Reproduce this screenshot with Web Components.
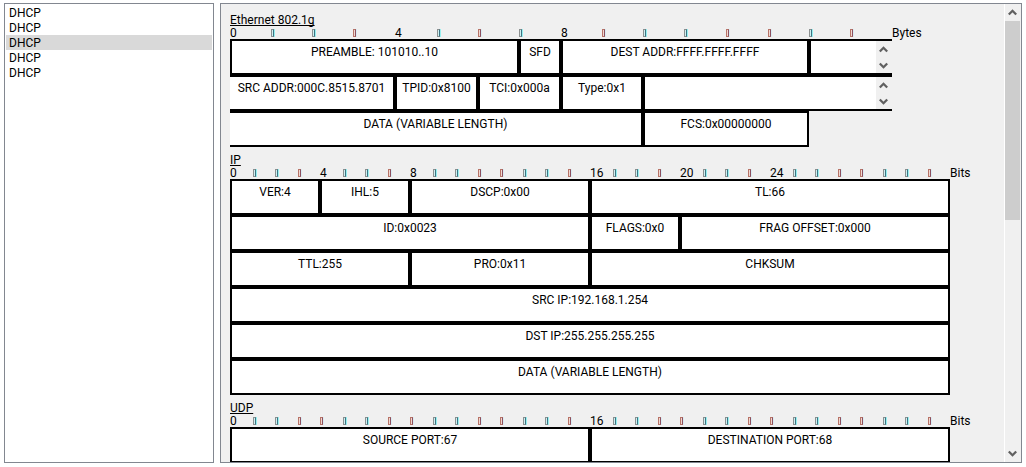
<!DOCTYPE html>
<html lang="en">
<head>
<meta charset="utf-8">
<title>Packet fields</title>
<style>
body { margin: 0; background: #fff; font: 12px/15px Roboto, "Liberation Sans", sans-serif; color: #000; }
</style>
</head>
<body>
<packet-app></packet-app>
<script>
const chevron = dir => `<svg width="9" height="7" viewBox="0 0 9 7" aria-hidden="true"><path d="${dir === 'up' ? 'M0.8 5.5 4.5 1.8 8.2 5.5' : 'M0.8 1.5 4.5 5.2 8.2 1.5'}" fill="none" stroke="#606060" stroke-width="2.3"/></svg>`;

class ScrollRail extends HTMLElement {
  connectedCallback() {
    const thumb = this.hasAttribute('thumb');
    this.attachShadow({ mode: 'open' }).innerHTML = `
      <style>
        :host { display: flex; flex-direction: column; width: 16px; flex: none; background: #f0f0f0; box-sizing: border-box; padding-right: 1px; }
        :host([thumb]) { width: 17px; border-left: 1px solid #fff; }
        button { all: unset; display: grid; place-items: center; flex: 0 1 17px; min-height: 0; }
        .track { flex: 1; min-height: 0; }
        .thumb { height: 47%; background: #cdcdcd; }
        svg { display: block; }
      </style>
      <button aria-label="Scroll up">${chevron('up')}</button>
      ${thumb ? '<div class="track"><div class="thumb"></div></div>' : ''}
      <button aria-label="Scroll down">${chevron('down')}</button>`;
  }
}
customElements.define('scroll-rail', ScrollRail);

class PacketList extends HTMLElement {
  connectedCallback() {
    this.attachShadow({ mode: 'open' }).innerHTML = `
      <style>
        :host { display: block; box-sizing: border-box; border: 1px solid #828790; background: #fff; padding: 1px; }
        ul { list-style: none; margin: 0; padding: 0; }
        li { padding: 0 3px; height: 15px; line-height: 17px; }
        li[aria-current] { background: #d9d9d9; }
      </style>
      <ul>${this.getAttribute('items').split(',').map((t, i) =>
        `<li${i === +this.getAttribute('selected') ? ' aria-current="true"' : ''}>${t}</li>`).join('')}</ul>`;
  }
}
customElements.define('packet-list', PacketList);

class FieldRuler extends HTMLElement {
  connectedCallback() {
    const n = +this.getAttribute('count');
    const labels = this.getAttribute('labels').split(',').map(Number);
    const warm = this.getAttribute('warm').split(',').map(Number);
    let cells = '';
    for (let i = 0; i < n; i++) {
      cells += labels.includes(i) ? `<span>${i}</span>` : `<i class="${warm.includes(i) ? 'warm' : ''}"></i>`;
    }
    this.attachShadow({ mode: 'open' }).innerHTML = `
      <style>
        :host { display: flex; height: 13px; line-height: 15px; }
        .scale { display: grid; grid-template-columns: var(--cols); width: var(--span); }
        span { width: 0; white-space: nowrap; }
        i { width: 1px; height: 6px; margin-top: 3px; border: 1px solid #8c9090; border-right-color: #3c7484; box-shadow: 1px 0 #98f0f0; background: #d0f0f0; }
        i.warm { border-color: #b87468; border-right-color: #8c5060; box-shadow: 1px 0 #d8ecf4; background: #f0d8d0; }
        b { font-weight: normal; }
      </style>
      <div class="scale">${cells}</div><b>${this.getAttribute('unit')}</b>`;
  }
}
customElements.define('field-ruler', FieldRuler);

class FieldCell extends HTMLElement {
  connectedCallback() {
    this.style.gridColumn = `span ${this.getAttribute('span')}`;
    this.attachShadow({ mode: 'open' }).innerHTML = `
      <style>
        :host { display: flex; justify-content: center; box-sizing: border-box; height: 36px; border: 2px solid #000; background: #fff; min-width: 0; }
        :host([open~="left"]) { border-left: 0; }
        :host([open~="right"]) { border-right: 0; }
        p { margin: 0; padding-top: 4px; white-space: nowrap; flex: 1; text-align: center; min-width: 0; }
      </style>
      <p><slot></slot></p>${this.hasAttribute('scroll') ? '<scroll-rail></scroll-rail>' : ''}`;
  }
}
customElements.define('field-cell', FieldCell);

class ProtocolHeader extends HTMLElement {
  connectedCallback() {
    this.attachShadow({ mode: 'open' }).innerHTML = `
      <style>
        :host { display: block; --span: 720px; --cols: repeat(32, minmax(0, 1fr)); }
        :host([bytes]) { --span: 662px; --cols: repeat(2, 41fr 41fr 41fr 42fr 42fr 41fr 41fr 42fr); }
        h2 { font: inherit; height: 13px; margin: 0; text-decoration: underline; text-underline-offset: 1px; text-decoration-skip-ink: none; }
        .grid { display: grid; grid-template-columns: var(--cols); width: var(--span); max-width: 100%; }
      </style>
      <h2>${this.getAttribute('name')}</h2>
      <slot name="ruler"></slot>
      <div class="grid"><slot></slot></div>`;
  }
}
customElements.define('protocol-header', ProtocolHeader);

class PacketApp extends HTMLElement {
  connectedCallback() {
    const bitWarm = '3,4,7,8,11,12,15,16,19,20,23,24,27,28,31';
    this.attachShadow({ mode: 'open' }).innerHTML = `
      <style>
        :host { display: grid; grid-template-columns: 210px minmax(0, 1fr); gap: 6px; height: 100vh; box-sizing: border-box; padding: 3px 4px 4px; }
        main { display: flex; box-sizing: border-box; min-height: 0; border: 1px solid #828790; background: #f0f0f0; }
        .sheet { flex: 1; min-width: 0; overflow: hidden; padding: 9px 0 0 9px; display: flex; flex-direction: column; gap: 6px; }
        protocol-header { flex: none; }
      </style>
      <packet-list items="DHCP,DHCP,DHCP,DHCP,DHCP" selected="2"></packet-list>
      <main>
        <div class="sheet">
          <protocol-header name="Ethernet 802.1g" bytes>
            <field-ruler slot="ruler" count="16" labels="0,4,8" warm="3,6,9,12,13,15" unit="Bytes"></field-ruler>
            <field-cell span="7">PREAMBLE: 101010..10</field-cell>
            <field-cell span="1">SFD</field-cell>
            <field-cell span="6">DEST ADDR:FFFF.FFFF.FFFF</field-cell>
            <field-cell span="2" open="right" scroll></field-cell>
            <field-cell span="4" open="left">SRC ADDR:000C.8515.8701</field-cell>
            <field-cell span="2">TPID:0x8100</field-cell>
            <field-cell span="2">TCI:0x000a</field-cell>
            <field-cell span="2">Type:0x1</field-cell>
            <field-cell span="6" open="right" scroll></field-cell>
            <field-cell span="10" open="left">DATA (VARIABLE LENGTH)</field-cell>
            <field-cell span="4">FCS:0x00000000</field-cell>
          </protocol-header>
          <protocol-header name="IP">
            <field-ruler slot="ruler" count="32" labels="0,4,8,16,20,24" warm="${bitWarm}" unit="Bits"></field-ruler>
            <field-cell span="4">VER:4</field-cell>
            <field-cell span="4">IHL:5</field-cell>
            <field-cell span="8">DSCP:0x00</field-cell>
            <field-cell span="16">TL:66</field-cell>
            <field-cell span="16">ID:0x0023</field-cell>
            <field-cell span="4">FLAGS:0x0</field-cell>
            <field-cell span="12">FRAG OFFSET:0x000</field-cell>
            <field-cell span="8">TTL:255</field-cell>
            <field-cell span="8">PRO:0x11</field-cell>
            <field-cell span="16">CHKSUM</field-cell>
            <field-cell span="32">SRC IP:192.168.1.254</field-cell>
            <field-cell span="32">DST IP:255.255.255.255</field-cell>
            <field-cell span="32">DATA (VARIABLE LENGTH)</field-cell>
          </protocol-header>
          <protocol-header name="UDP">
            <field-ruler slot="ruler" count="32" labels="0,16" warm="${bitWarm}" unit="Bits"></field-ruler>
            <field-cell span="16">SOURCE PORT:67</field-cell>
            <field-cell span="16">DESTINATION PORT:68</field-cell>
          </protocol-header>
        </div>
        <scroll-rail thumb></scroll-rail>
      </main>`;
  }
}
customElements.define('packet-app', PacketApp);
</script>
</body>
</html>
